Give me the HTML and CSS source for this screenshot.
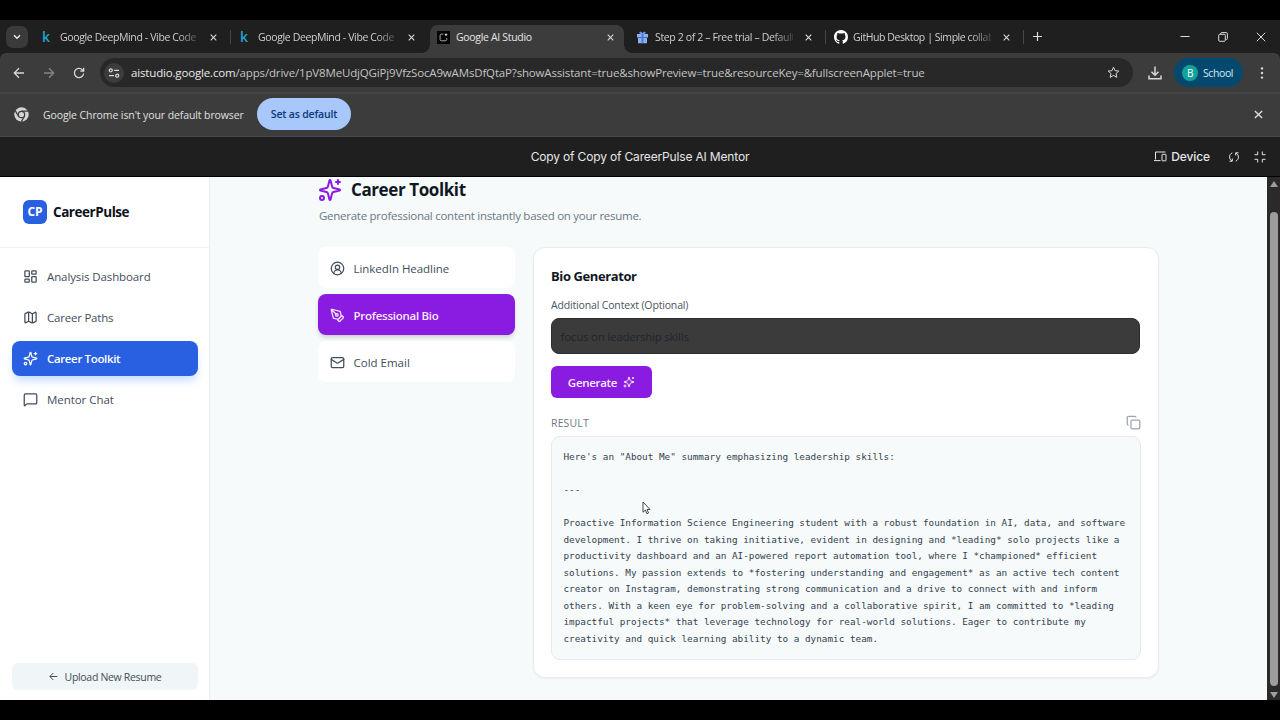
FILE: index.html
```html
<!DOCTYPE html>
<html lang="en">
<head>
<meta charset="utf-8">
<title>Google AI Studio</title>
<link rel="stylesheet" href="styles.css">
</head>
<body>
<svg class="defs" aria-hidden="true">
  <symbol id="sparkles" viewBox="0 0 24 24"><path d="M9.94 15.5A2 2 0 0 0 8.5 14.06l-6.14-1.58a.5.5 0 0 1 0-.96L8.5 9.94A2 2 0 0 0 9.94 8.5l1.58-6.14a.5.5 0 0 1 .96 0L14.06 8.5a2 2 0 0 0 1.44 1.44l6.14 1.58a.5.5 0 0 1 0 .96L15.5 14.06a2 2 0 0 0-1.44 1.44l-1.58 6.14a.5.5 0 0 1-.96 0z"/><path d="M20 2v4M22 4h-4"/><circle cx="4" cy="20" r="2"/></symbol>
  <symbol id="close" viewBox="0 0 8 8"><path d="M.8.8l6.4 6.4M7.2.8L.8 7.2"/></symbol>
</svg>
<div class="screen">
  <div class="tabstrip">
    <div class="tabsearch"><svg width="8" height="6" viewBox="0 0 8 6"><path d="M1 1.2l3 3 3-3"/></svg></div>
    <div class="tab sep"><span class="fav kag">k</span><span class="title fade">Google DeepMind - Vibe Code</span><svg class="x"><use href="#close"/></svg></div>
    <div class="tab"><span class="fav kag">k</span><span class="title fade">Google DeepMind - Vibe Code</span><svg class="x"><use href="#close"/></svg></div>
    <div class="tab active"><span class="fav"><svg width="13" height="13" viewBox="0 0 13 13"><rect class="solid" width="13" height="13" fill="#050505"/><path d="M6.300 3.200H4.400a1.300 1.300 0 0 0-1.300 1.300v4a1.300 1.300 0 0 0 1.300 1.300h4a1.300 1.300 0 0 0 1.300-1.300V7" fill="none" stroke="#bbb" stroke-width=".9"/><path d="M9 2l.5 1.300 1.300.5-1.300.5L9 5.600l-.5-1.300-1.300-.5 1.300-.5z" fill="#fff" stroke="none"/></svg></span><span class="title">Google AI Studio</span><svg class="x"><use href="#close"/></svg></div>
    <div class="tab sep"><span class="fav"><svg class="solid" width="13" height="13" viewBox="0 0 13 13"><path d="M1 3h11v3.400H1zM2 7h9v5.300H2z" fill="#8db0f4"/><path d="M5.500 3h2v9.300h-2z" fill="#4a78dc"/><path d="M6.500 3.200C4.300 3.400 3.200 2.600 3.400 1.500s2.300-.9 3.100.8C7.300.6 9.400.4 9.600 1.500S8.700 3.400 6.500 3.200z" fill="#6a93ea"/></svg></span><span class="title fade">Step 2 of 2 – Free trial – Default</span><svg class="x"><use href="#close"/></svg></div>
    <div class="tab sep"><span class="fav"><svg class="solid" width="14" height="14" viewBox="0 0 16 16"><path fill="#fff" d="M8 0C3.580 0 0 3.580 0 8c0 3.540 2.290 6.530 5.470 7.590.4.070.55-.17.55-.38 0-.19-.01-.82-.01-1.490-2.010.37-2.530-.49-2.690-.94-.09-.23-.48-.94-.82-1.130-.28-.15-.68-.52-.01-.53.630-.01 1.080.58 1.230.82.720 1.210 1.870.87 2.330.66.070-.52.28-.87.510-1.070-1.780-.2-3.640-.89-3.640-3.950 0-.87.310-1.590.82-2.150-.08-.2-.36-1.020.08-2.120 0 0 .67-.21 2.200.82.640-.18 1.320-.27 2-.27s1.360.09 2 .27c1.530-1.040 2.200-.82 2.200-.82.440 1.100.16 1.920.08 2.120.510.560.82 1.270.82 2.150 0 3.070-1.870 3.750-3.650 3.950.290.250.540.730.540 1.480 0 1.070-.01 1.930-.01 2.200 0 .210.150.460.550.380A8 8 0 0 0 16 8c0-4.420-3.580-8-8-8z"/></svg></span><span class="title fade t-gh">GitHub Desktop | Simple collab</span><svg class="x"><use href="#close"/></svg></div>
    <svg class="plus" width="9" height="9" viewBox="0 0 9 9"><path d="M4.500 0v9M0 4.500h9"/></svg>
    <div class="winctl">
      <svg width="10" height="10" viewBox="0 0 10 10"><path d="M.5 4.500h9"/></svg>
      <svg width="10" height="10" viewBox="0 0 10 10"><rect x=".7" y="2.300" width="6.600" height="7" rx="1"/><path d="M2.700 2V1.600a1 1 0 0 1 1-1h4.400a1.300 1.300 0 0 1 1.300 1.300v4.600a1 1 0 0 1-1 1h-.7"/></svg>
      <svg width="10" height="10" viewBox="0 0 10 10"><path d="M.8.8l8.400 8.400M9.200.8L.8 9.200"/></svg>
    </div>
  </div>

  <div class="toolwrap"><div class="toolbar">
    <svg class="nav" width="12" height="12" viewBox="0 0 12 12"><path d="M11 6H1.500M6 1.300L1.300 6 6 10.700"/></svg>
    <svg class="nav dim" width="12" height="12" viewBox="0 0 12 12"><path d="M1 6h9.500M6 1.300L10.700 6 6 10.700"/></svg>
    <svg class="nav" width="12" height="12" viewBox="0 0 12 12"><path d="M10.600 6.500A4.600 4.600 0 1 1 9.300 2.700L10.600 4M10.700.8V4.200H7.300"/></svg>
    <div class="omnibox">
      <div class="site"><svg width="12" height="10" viewBox="0 0 12 10"><circle cx="2.800" cy="2.300" r="1.500"/><path d="M6 2.300h5M1 7.700h5"/><circle cx="9.200" cy="7.700" r="1.500"/></svg></div>
      <span class="url"><b>aistudio.google.com</b>/apps/drive/1pV8MeUdjQGiPj9VfzSocA9wAMsDfQtaP?showAssistant=true&amp;showPreview=true&amp;resourceKey=&amp;fullscreenApplet=true</span>
      <svg class="star" width="13" height="13" viewBox="0 0 13 13"><path d="M6.500 1.200l1.550 3.500 3.800.35-2.850 2.550.85 3.750L6.500 9.400l-3.350 1.950L4 7.600 1.150 5.050l3.800-.35z"/></svg>
    </div>
    <svg class="dl" width="14" height="14" viewBox="0 0 14 14"><path d="M7 .5v8.500M3.500 5.700L7 9.200l3.500-3.500M1 9.500v3.300h12V9.500"/></svg>
    <div class="profile"><span class="ava">B</span><span class="t-school">School</span></div>
    <svg class="dots" width="4" height="12" viewBox="0 0 4 12"><circle cx="2" cy="1.400" r="1.200"/><circle cx="2" cy="6" r="1.200"/><circle cx="2" cy="10.600" r="1.200"/></svg>
  </div></div>

  <div class="infobar">
    <svg class="solid" width="15" height="15" viewBox="0 0 16 16"><circle cx="8" cy="8" r="7.700" fill="#d4d4d4"/><path class="cut" d="M8 4.300h7M4.800 9.900L1.300 3.900M11.200 9.900L7.700 15.900"/><circle class="cut" cx="8" cy="8" r="3.400" fill="#d4d4d4"/></svg>
    <span class="t-info">Google Chrome isn't your default browser</span>
    <span class="setdef"><span class="t-set">Set as default</span></span>
    <svg class="x"><use href="#close"/></svg>
  </div>

  <div class="apphead">
    <span class="t-app">Copy of Copy of CareerPulse AI Mentor</span>
    <div class="tools">
      <svg width="13" height="11" viewBox="0 0 13 11"><path d="M11.500 1H1.500v7.500M0 9.600h6.500" /><rect x="8" y="3.300" width="4" height="6.500" rx=".4"/></svg>
      <span class="t-dev">Device</span>
      <svg class="sync" width="12" height="12" viewBox="0 0 12 12"><path d="M4.300 1.800C.6 3.500.8 8.300 4 9.900M1.500 10.200h2.800V7.500M7.700 10.200C11.400 8.500 11.200 3.700 8 2.100M10.500 1.800H7.700v2.700"/></svg>
      <svg class="shrink" width="12" height="12" viewBox="0 0 12 12"><path d="M3.700.5v3.200H.5M8.300.5v3.200h3.200M3.700 11.500V8.300H.5M8.300 11.500V8.300h3.200"/></svg>
    </div>
  </div>

  <div class="app">
    <aside class="side">
      <div class="brand"><span class="logo">CP</span><span class="t-brand">CareerPulse</span></div>
      <nav class="menu">
        <div class="item"><svg class="ic" viewBox="0 0 24 24"><rect x="3" y="3" width="7" height="9" rx="1"/><rect x="14" y="3" width="7" height="5" rx="1"/><rect x="14" y="12" width="7" height="9" rx="1"/><rect x="3" y="16" width="7" height="5" rx="1"/></svg><span class="t-m1">Analysis Dashboard</span></div>
        <div class="item"><svg class="ic" viewBox="0 0 24 24"><path d="M14.100 5.550a2 2 0 0 0 1.800 0l3.650-1.830A1 1 0 0 1 21 4.620v12.760a1 1 0 0 1-.55.9l-4.550 2.270a2 2 0 0 1-1.800 0l-4.200-2.100a2 2 0 0 0-1.800 0l-3.650 1.830A1 1 0 0 1 3 19.380V6.620a1 1 0 0 1 .55-.9L8.100 3.450a2 2 0 0 1 1.800 0zM15 5.760v15M9 3.240v15"/></svg><span class="t-m2">Career Paths</span></div>
        <div class="item on"><svg class="ic"><use href="#sparkles"/></svg><span class="t-m3">Career Toolkit</span></div>
        <div class="item"><svg class="ic" viewBox="0 0 24 24"><path d="M22 17a2 2 0 0 1-2 2H6.800a2 2 0 0 0-1.400.6l-2.200 2.200A.7.7 0 0 1 2 21.300V5a2 2 0 0 1 2-2h16a2 2 0 0 1 2 2z"/></svg><span class="t-m4">Mentor Chat</span></div>
      </nav>
      <div class="upload"><svg width="9" height="9" viewBox="0 0 9 9"><path d="M8.300 4.500H1M4.300 1L.8 4.500 4.300 8"/></svg><span class="t-up">Upload New Resume</span></div>
    </aside>
    <main class="main">
      <div class="head"><svg class="big"><use href="#sparkles"/></svg><h1 class="t-h1">Career Toolkit</h1></div>
      <p class="sub"><span class="t-sub">Generate professional content instantly based on your resume.</span></p>
      <div class="cols">
        <div class="opts">
          <div class="opt"><svg class="ic" viewBox="0 0 24 24"><circle cx="12" cy="12" r="10"/><circle cx="12" cy="10" r="3.500"/><path d="M6 20a6 6 0 0 1 12 0"/></svg><span class="t-o1">LinkedIn Headline</span></div>
          <div class="opt on"><svg class="ic" viewBox="0 0 24 24"><path d="M15.700 21.300a1 1 0 0 1-1.400 0l-1.600-1.600a1 1 0 0 1 0-1.400l5.600-5.600a1 1 0 0 1 1.400 0l1.600 1.600a1 1 0 0 1 0 1.400zM18 13l-1.400-6.900a1 1 0 0 0-.75-.78L3.200 2.030a1 1 0 0 0-1.200 1.200l3.300 12.600a1 1 0 0 0 .78.74L13 18M2.300 2.300l7.300 7.300"/><circle cx="11" cy="11" r="2"/></svg><span class="t-o2">Professional Bio</span></div>
          <div class="opt"><svg class="ic" viewBox="0 0 24 24"><rect x="2" y="4" width="20" height="16" rx="2"/><path d="M22 7l-9 5.700a2 2 0 0 1-2 0L2 7"/></svg><span class="t-o3">Cold Email</span></div>
        </div>
        <section class="card">
          <h2 class="t-h2">Bio Generator</h2>
          <div class="label"><span class="t-lab">Additional Context (Optional)</span></div>
          <div class="input"><span class="t-in">focus on leadership skills</span></div>
          <div class="gen"><span class="t-gen">Generate</span><svg><use href="#sparkles"/></svg></div>
          <div class="reshead"><span class="t-res">RESULT</span><svg width="15" height="15" viewBox="0 0 24 24"><rect x="8" y="8" width="14" height="14" rx="2"/><path d="M4 16a2 2 0 0 1-2-2V4a2 2 0 0 1 2-2h10a2 2 0 0 1 2 2"/></svg></div>
<pre class="result">Here's an "About Me" summary emphasizing leadership skills:

---

Proactive Information Science Engineering student with a robust foundation in AI, data, and software
development. I thrive on taking initiative, evident in designing and *leading* solo projects like a
productivity dashboard and an AI-powered report automation tool, where I *championed* efficient
solutions. My passion extends to *fostering understanding and engagement* as an active tech content
creator on Instagram, demonstrating strong communication and a drive to connect with and inform
others. With a keen eye for problem-solving and a collaborative spirit, I am committed to *leading
impactful projects* that leverage technology for real-world solutions. Eager to contribute my
creativity and quick learning ability to a dynamic team.</pre>
        </section>
      </div>
    </main>
    <div class="scroll">
      <svg width="8" height="6" viewBox="0 0 8 6"><path d="M4 0l4 6H0z"/></svg>
      <div class="thumb"></div>
      <svg width="8" height="6" viewBox="0 0 8 6"><path d="M0 0h8L4 6z"/></svg>
    </div>
  </div>
  <svg class="cursor" width="9" height="14" viewBox="0 0 9 14"><path d="M1 1v10.200l2.400-2.200 1.500 3.700 1.600-.7-1.500-3.500h3z"/></svg>
</div>
</body>
</html>
```
FILE: styles.css
```css
* { box-sizing: border-box; }
body { margin: 0; background: #000; font-family: "Open Sans", "Noto Sans", sans-serif; }
h1, h2, p, pre { margin: 0; }
svg { flex: none; fill: none; stroke: currentColor; display: block; }
.solid { stroke: none; }
span { white-space: nowrap; }
.defs { position: absolute; width: 0; height: 0; }
.screen { position: relative; width: 1280px; height: 720px; padding: 20px 0; display: flex; flex-direction: column; overflow: hidden; }

/* Tab strip */
.tabstrip { height: 33px; flex: none; background: #1f1f1f; display: flex; align-items: center; padding-left: 6px; color: #dcdcdc; }
.tabsearch { width: 22px; height: 22px; border-radius: 7px; background: #3a3a3a; display: flex; align-items: center; justify-content: center; margin-right: 6px; }
.tabsearch svg { stroke: #eee; stroke-width: 1.4; }
.tab { width: 198px; height: 28px; flex: none; display: flex; align-items: center; padding-left: 7px; position: relative; margin-top: 1px; }
.tab .fav { width: 13px; height: 14px; margin-right: 6px; display: flex; align-items: center; justify-content: center; }
.kag { color: #20a4cc; font: 600 14px/14px "Open Sans", sans-serif; padding-right: 3px; }
.title { width: 138px; font-size: 10.5px; line-height: 16px; color: #cfcfcf; letter-spacing: -.37px; }
.t-gh { letter-spacing: -.43px; }
.fade { -webkit-mask-image: linear-gradient(90deg, #000 85%, transparent 104%); mask-image: linear-gradient(90deg, #000 85%, transparent 104%); }
.x { width: 7px; height: 7px; stroke-width: 1.2; margin-left: 12px; }
.tab.active { background: #3c3c3c; border-radius: 8px 8px 0 0; width: 194px; margin-right: 5px; margin-top: 5px; padding-bottom: 4px; }
.tab.active::before, .tab.active::after { content: ""; position: absolute; bottom: 0; width: 8px; height: 8px; }
.tab.active::before { left: -8px; background: radial-gradient(circle at 0 0, #1f1f1f 7.5px, #3c3c3c 8px); }
.tab.active::after { right: -8px; background: radial-gradient(circle at 100% 0, #1f1f1f 7.5px, #3c3c3c 8px); }
.tab.active .title { color: #e6e6e6; letter-spacing: -.32px; }
.tab.active .x { margin-left: 13px; }
.sep::after { content: ""; position: absolute; right: 1px; top: 7px; width: 1px; height: 14px; background: #474747; }
.plus { margin-left: 8px; stroke-width: 1.2; }
.winctl { margin-left: auto; margin-right: 14px; display: flex; gap: 28px; }

/* Toolbar */
.toolwrap { flex: none; background: #1f1f1f; }
.toolbar { height: 39px; background: #3c3c3c; display: flex; align-items: center; padding-left: 13px; color: #d8d8d8; border-radius: 6px 6px 0 0; }
.nav { margin-right: 18px; stroke-width: 1.3; }
.dim { color: #858585; }
.omnibox { width: 1033px; height: 29px; margin-left: -3px; border-radius: 15px; background: #282828; display: flex; align-items: center; padding-left: 4px; }
.site { width: 20px; height: 20px; border-radius: 50%; background: #3c3c3c; display: flex; align-items: center; justify-content: center; margin-right: 7px; }
.site svg { stroke-width: 1.3; }
.url { width: 976px; font-size: 11.5px; line-height: 18px; color: #c4c4c4; padding-top: 1px; letter-spacing: -.16px; }
.url b { font-weight: 400; color: #e8e8e8; }
.dl { margin-left: 15px; stroke-width: 1.5; }
.profile { width: 69px; height: 29px; border-radius: 15px; background: #054a6e; margin-left: 12px; display: flex; align-items: center; padding-left: 8px; color: #cfe8fb; font-size: 10.5px; letter-spacing: -.4px; }
.ava { width: 16px; height: 16px; border-radius: 50%; background: #12a39c; color: #fff; font-size: 10px; line-height: 16px; text-align: center; margin-right: 5px; }
.dots { margin-left: 17px; fill: currentColor; stroke: none; }

/* Default-browser bar */
.infobar { height: 45px; flex: none; background: #3c3c3c; border-top: 2px solid #444; border-bottom: 1px solid #454746; display: flex; align-items: center; padding: 0 0 2px 14px; color: #e0e0e0; font-size: 10.5px; }
.cut { stroke: #3c3c3c; stroke-width: 1.3; }
.t-info { width: 201px; margin: 1px 13px 0 14px; letter-spacing: -.1px; }
.setdef { width: 94px; height: 32px; border-radius: 16px; background: #a8c7fa; color: #0b3a78; font-weight: 600; display: flex; align-items: center; justify-content: center; letter-spacing: -.18px; }
.infobar .x { width: 9px; height: 9px; margin: 0 17px 0 auto; stroke: #ddd; }

/* App header */
.apphead { height: 40px; flex: none; background: #1f1f1f; border-bottom: 1px solid #000; color: #e6e6e6; font: 12px/18px Inter, sans-serif; display: grid; grid-template-columns: 1fr auto 1fr; align-items: center; }
.t-app { grid-column: 2; letter-spacing: -.16px; }
.tools { display: flex; align-items: center; justify-content: flex-end; padding-right: 14px; }
.t-dev { margin-left: 4px; font-weight: 500; letter-spacing: -.1px; }
.sync { margin-left: 18px; }
.shrink { margin-left: 14px; }

/* Page */
.app { flex: 1; min-height: 0; display: flex; background: #f6fafb; font-size: 11.5px; }
.side { width: 210px; flex: none; background: #fff; border-right: 1px solid #e7edf1; display: flex; flex-direction: column; }
.brand { height: 71px; border-bottom: 1px solid #f0f3f6; display: flex; align-items: center; padding-left: 23px; color: #0c1220; font-weight: 700; font-size: 13.5px; }
.logo { width: 24px; height: 24px; border-radius: 6px; background: #2860e1; color: #fff; font-size: 12px; line-height: 24px; text-align: center; margin-right: 6px; }
.t-brand { letter-spacing: -.46px; }
.menu { padding: 11px 11px 0 12px; display: flex; flex-direction: column; gap: 6px; }
.item { height: 35px; border-radius: 8px; display: flex; align-items: center; padding-left: 11px; color: #434d5b; font-weight: 500; }
.ic { width: 15px; height: 15px; stroke-width: 2; margin-right: 9px; stroke-linecap: round; stroke-linejoin: round; }
.item.on { background: #2860e1; color: #fff; box-shadow: 0 6px 10px -2px #bfdbfe; }
.t-m1 { letter-spacing: -.11px; }
.t-m2 { letter-spacing: -.22px; }
.t-m3 { letter-spacing: -.36px; font-weight: 600; }
.t-m4 { letter-spacing: -.05px; }
.upload { height: 27px; margin: auto 11px 10px 12px; border-radius: 6px; background: #f0f5f7; display: flex; align-items: center; justify-content: center; gap: 7px; color: #434d5b; font-weight: 500; font-size: 10.5px; letter-spacing: -.31px; }
.main { flex: 1; min-width: 0; padding: 0 108px 0 109px; }
.head { display: flex; align-items: center; height: 25px; }
.big { width: 24px; height: 24px; margin-left: -1px; margin-right: 9px; color: #8a1be0; stroke-width: 2; stroke-linecap: round; stroke-linejoin: round; }
.t-h1 { font-size: 17px; line-height: 24px; font-weight: 700; color: #101724; letter-spacing: -.4px; padding-top: 1px; }
.sub { color: #6b7885; line-height: 18px; padding-top: 5px; height: 45px; letter-spacing: -.265px; }
.cols { display: flex; gap: 18px; align-items: flex-start; margin-left: -1px; }
.opts { width: 197px; flex: none; display: flex; flex-direction: column; gap: 6px; }
.opt { height: 41px; border-radius: 8px; background: #fff; display: flex; align-items: center; padding: 1px 0 0 12px; color: #434d5b; font-weight: 500; }
.opt .ic { margin-right: 8.500px; }
.opt.on { background: #8a1be0; color: #fbeaff; box-shadow: 0 3px 5px -1px #0003; }
.t-o1 { letter-spacing: -.04px; }
.t-o2 { letter-spacing: -.26px; font-weight: 600; }
.card { width: 626px; flex: none; height: 431px; background: #fff; border: 1px solid #e6ecf0; border-radius: 12px; padding: 18px 17px 0; box-shadow: 0 1px 2px #0000000d; }
.t-h2 { font-size: 13px; line-height: 20px; font-weight: 700; color: #101724; letter-spacing: -.4px; }
.label { margin-top: 10px; line-height: 18px; font-size: 10.500px; font-weight: 500; color: #4b5563; letter-spacing: -.16px; }
.input { margin-top: 4px; height: 36px; width: 589px; border: 1px solid #2c2c2c; border-radius: 8px; background: #3b3b3b; color: #20262d; display: flex; align-items: center; padding-left: 8.500px; letter-spacing: -.22px; }
.gen { margin-top: 12px; width: 101px; height: 32px; border-radius: 6px; background: #8a1be0; color: #fbeaff; display: flex; align-items: center; justify-content: center; gap: 6px; font-weight: 600; letter-spacing: -.3px; }
.gen svg { width: 12px; height: 12px; stroke-width: 2; }
.reshead { height: 38px; display: flex; justify-content: space-between; align-items: center; padding-top: 11px; color: #6b7885; font-size: 10.500px; font-weight: 500; letter-spacing: .15px; }
.reshead svg { stroke: #9ca3af; stroke-width: 2; }
.result { height: 224px; width: 590px; border: 1px solid #e4eaee; border-radius: 9px; background: #f6fafb; padding: 12px 11.500px; font: 9.330px/16.550px "DejaVu Sans Mono", monospace; color: #333f4e; }
.scroll { width: 13px; flex: none; background: #2a2a2a; display: flex; flex-direction: column; align-items: center; padding: 4px 0 2px; }
.scroll svg { fill: #9d9d9d; stroke: none; }
.thumb { width: 8px; height: 474px; margin: 25px 0 auto; border-radius: 4px; background: #9d9d9d; }
.cursor { position: absolute; left: 642px; top: 501px; fill: #fff; stroke: #333; stroke-width: .9; }
```
